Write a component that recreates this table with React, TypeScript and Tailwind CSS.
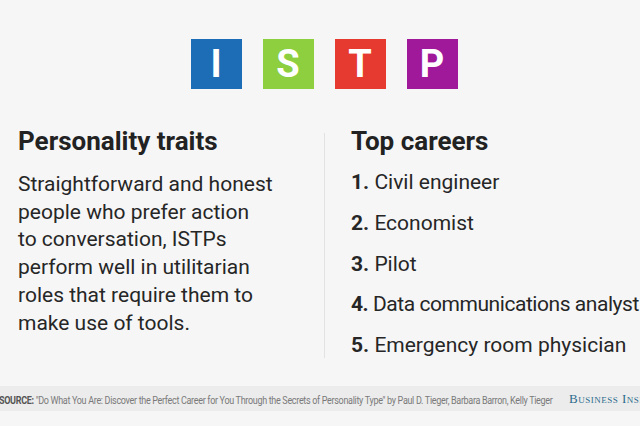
const letters = [
  { ch: 'I', bg: 'bg-[#1d6cb6]' },
  { ch: 'S', bg: 'bg-[#8dcf3f]' },
  { ch: 'T', bg: 'bg-[#e63a30]' },
  { ch: 'P', bg: 'bg-[#a0199a]' },
]

const careers = [
  'Civil engineer',
  'Economist',
  'Pilot',
  'Data communications analyst',
  'Emergency room physician',
]

export default function App() {
  return (
    <div
      className="h-[426px] w-[640px] overflow-hidden bg-[#f6f6f6] flex flex-col text-[#262626]"
      style={{ fontFamily: 'Roboto, "Liberation Sans", sans-serif' }}
    >
      {/* Type letters */}
      <div className="flex justify-center gap-[21px] pt-[39px] pl-[8px]">
        {letters.map((l) => (
          <div
            key={l.ch}
            className={`w-[51px] h-[50px] ${l.bg} flex items-center justify-center text-white font-bold text-[38px] leading-none`}
          >
            {l.ch}
          </div>
        ))}
      </div>

      {/* Columns */}
      <div className="flex mt-[37px]">
        <div className="w-[324px] shrink-0 pl-[18px]">
          <h2 className="text-[26px] leading-[30px] font-bold text-[#222]">Personality traits</h2>
          <p className="mt-[15px] text-[21px] leading-[27.7px]">
            Straightforward and honest
            <br />
            people who prefer action
            <br />
            to conversation, ISTPs
            <br />
            perform well in utilitarian
            <br />
            roles that require them to
            <br />
            make use of tools.
          </p>
        </div>
        <div className="mt-[7px] h-[225px] w-px shrink-0 bg-[#e2e2e2]" />
        <div className="pl-[26px] whitespace-nowrap">
          <h2 className="text-[26px] leading-[30px] font-bold text-[#222]">Top careers</h2>
          <ol className="mt-[6px] text-[21px] leading-[40.75px]">
            {careers.map((c, i) => (
              <li key={c} className={i === 3 ? 'tracking-[-0.45px]' : ''}>
                <span className="font-bold">{i + 1}.</span> {c}
              </li>
            ))}
          </ol>
        </div>
      </div>

      {/* Source footer */}
      <div className="mt-auto mb-[15px] h-[25px] bg-[#ececec] flex items-center whitespace-nowrap overflow-hidden">
        <div className="w-[557px] shrink-0 overflow-visible">
          <span className="inline-block origin-left scale-x-[0.9] text-[10px] text-[#7a7a7a] tracking-[-0.35px] -ml-[1px]">
            <span className="font-bold text-[#555]">SOURCE:</span> "Do What You Are: Discover the Perfect Career for
            You Through the Secrets of Personality Type" by Paul D. Tieger, Barbara Barron, Kelly Tieger
          </span>
        </div>
        <span
          className="ml-[12px] text-[13px] text-[#2d6d8c] tracking-[0.5px] [font-variant:small-caps]"
          style={{ fontFamily: '"Liberation Serif", serif' }}
        >
          Business Insider
        </span>
      </div>
    </div>
  )
}
